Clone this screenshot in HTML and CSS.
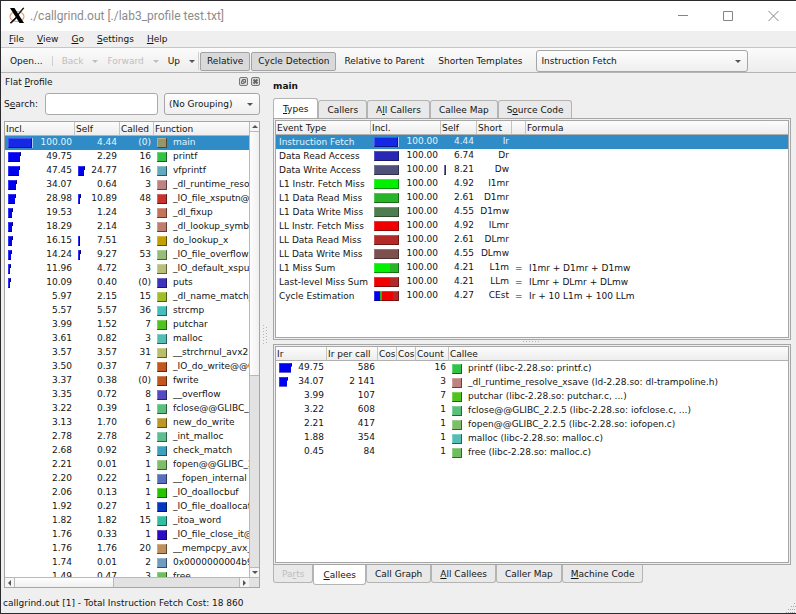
FILE: index.html
```html
<!DOCTYPE html>
<html lang="en">
<head>
<meta charset="utf-8">
<title>./callgrind.out [./lab3_profile test.txt]</title>
<link rel="stylesheet" href="styles.css">
</head>
<body>
<div class="window">
  <header class="titlebar">
    <svg class="logo" width="18" height="18" viewBox="0 0 18 18" aria-hidden="true">
      <ellipse cx="9" cy="9.500" rx="7" ry="5" fill="none" stroke="#e8a078" stroke-width="1.2"/>
      <path d="M2 1h4.500l9.500 15h-4.500z" fill="#000"/>
      <path d="M15 1h1L10 8.500 9.500 7.800zM8 10l.7.900L3.500 16H2z" fill="#000" stroke="#000" stroke-width=".6"/>
    </svg>
    <h1 class="title">./callgrind.out [./lab3_profile test.txt]</h1>
    <div class="controls">
      <button type="button" aria-label="Minimize"><svg width="11" height="11" viewBox="0 0 11 11"><path d="M0 4.500h10"/></svg></button>
      <button type="button" aria-label="Maximize"><svg width="11" height="11" viewBox="0 0 11 11"><path d="M.5.500h9v9h-9z"/></svg></button>
      <button type="button" aria-label="Close"><svg width="11" height="11" viewBox="0 0 11 11"><path d="M.5 0l10 10M10.500 0l-10 10"/></svg></button>
    </div>
  </header>
  <nav class="menubar">
    <button type="button"><u>F</u>ile</button>
    <button type="button"><u>V</u>iew</button>
    <button type="button"><u>G</u>o</button>
    <button type="button"><u>S</u>ettings</button>
    <button type="button"><u>H</u>elp</button>
  </nav>
  <div class="toolbar">
    <button type="button" class="tool open">Open...</button>
    <span class="sep"></span>
    <button type="button" class="tool drop" disabled>Back</button>
    <button type="button" class="tool drop" disabled>Forward</button>
    <button type="button" class="tool drop">Up</button>
    <span class="sep last"></span>
    <button type="button" class="tool toggle" aria-pressed="true">Relative</button>
    <button type="button" class="tool toggle" aria-pressed="true">Cycle Detection</button>
    <button type="button" class="tool plain">Relative to Parent</button>
    <button type="button" class="tool plain">Shorten Templates</button>
    <span class="combo event"><select aria-label="Event type"><option>Instruction Fetch</option></select></span>
  </div>
  <main class="body">
    <section class="dock">
      <div class="dock-title">
        <span>Flat <u>P</u>rofile</span>
        <span class="dock-buttons">
          <button type="button" aria-label="Float"><svg width="9" height="9" viewBox="0 0 9 9"><rect x=".5" y=".5" width="8" height="8" rx="1.500"/><path d="M3.500 4V2.500h3v3H5M2.500 4h2.500v2.500h-2.500z"/></svg></button>
          <button type="button" aria-label="Close dock"><svg width="9" height="9" viewBox="0 0 9 9"><rect x=".5" y=".5" width="8" height="8" rx="1.500"/><path class="cross" d="M2.500 2.500l4 4M6.500 2.500l-4 4"/></svg></button>
        </span>
      </div>
      <div class="search">
        <label for="search">S<u>e</u>arch:</label>
        <input id="search" type="text">
        <span class="combo"><select aria-label="Grouping"><option>(No Grouping)</option></select></span>
      </div>
      <div class="list">
        <div class="clip">
          <table class="grid profile">
            <colgroup><col class="w-incl"><col class="w-self"><col class="w-called"><col></colgroup>
            <thead><tr><th>Incl.</th><th>Self</th><th>Called</th><th>Function</th></tr></thead>
            <tbody id="profile"></tbody>
          </table>
        </div>
        <div class="vbar"><span class="arrow up"></span><span class="thumb"></span><span class="track"></span><span class="arrow down"></span></div>
        <div class="hbar"><span class="arrow left"></span><span class="thumb"></span><span class="track"></span><span class="arrow right"></span></div>
      </div>
    </section>
    <div class="handle vertical"><svg width="4" height="20" viewBox="0 0 4 20"><path d="M.5 0v20M3.500 2v18"/></svg></div>
    <section class="detail">
      <h2 class="name">main</h2>
      <div class="tabs top" role="tablist">
        <button type="button" role="tab" aria-selected="true"><u>T</u>ypes</button>
        <button type="button" role="tab">Callers</button>
        <button type="button" role="tab">A<u>l</u>l Callers</button>
        <button type="button" role="tab">Callee Map</button>
        <button type="button" role="tab">S<u>o</u>urce Code</button>
      </div>
      <div class="pane"><div class="clip">
        <table class="grid types">
          <colgroup><col class="w-type"><col class="w-incl"><col class="w-self2"><col class="w-short"><col class="w-eq"><col></colgroup>
          <thead><tr><th>Event Type</th><th>Incl.</th><th>Self</th><th>Short</th><th></th><th>Formula</th></tr></thead>
          <tbody id="types"></tbody>
        </table>
      </div></div>
      <div class="handle"><svg width="18" height="4" viewBox="0 0 18 4"><path d="M0 1.500h18"/></svg></div>
      <div class="pane"><div class="clip">
        <table class="grid callees">
          <colgroup><col class="w-ir"><col class="w-ir"><col class="w-cos"><col class="w-cos"><col class="w-count"><col></colgroup>
          <thead><tr><th>Ir</th><th>Ir per call</th><th>Cos</th><th>Cos</th><th>Count</th><th>Callee</th></tr></thead>
          <tbody id="callees"></tbody>
        </table>
      </div></div>
      <div class="tabs bottom" role="tablist">
        <button type="button" role="tab" disabled>Pa<u>r</u>ts</button>
        <button type="button" role="tab" aria-selected="true"><u>C</u>allees</button>
        <button type="button" role="tab">Call Graph</button>
        <button type="button" role="tab"><u>A</u>ll Callees</button>
        <button type="button" role="tab">Caller Map</button>
        <button type="button" role="tab"><u>M</u>achine Code</button>
      </div>
    </section>
  </main>
  <footer class="status">
    <span>callgrind.out [1] - Total Instruction Fetch Cost: 18 860</span>
    <svg class="grip" width="10" height="10" viewBox="0 0 10 10" aria-hidden="true"><path d="M8 .5h2M5 3.500h5M2 6.500h8M0 9.500h10"/></svg>
  </footer>
</div>
<script src="app.js"></script>
</body>
</html>
```
FILE: styles.css
```css
* { box-sizing: border-box; }

body {
  margin: 0;
  background: #efefef;
  color: #141414;
  font: 9px/14px "DejaVu Sans", sans-serif;
}

button, input, select { font: inherit; color: inherit; margin: 0; }
button { border: 0; padding: 0; background: none; white-space: nowrap; }
u { text-underline-offset: 1px; }

.window {
  height: 100vh;
  display: flex;
  flex-direction: column;
  border: 1px solid #2b2b2f;
  border-right: 0;
  background: #efefef;
}

.titlebar {
  display: flex;
  align-items: center;
  height: 30px;
  flex: none;
  padding-left: 7px;
  background: #fff;
}
.title {
  flex: 1;
  margin: 0 0 0 4px;
  font: 12px/16px Roboto, sans-serif;
  color: #8c8c8c;
}
.controls { display: flex; }
.controls button { width: 45px; height: 28px; }
.controls svg { display: block; margin: auto; }
.controls path { fill: none; stroke: #858585; }

.menubar {
  display: flex;
  flex: none;
  gap: 13px;
  height: 17px;
  padding-left: 8px;
  border-bottom: 1px solid #c6c6c6;
}

.toolbar {
  display: flex;
  align-items: center;
  flex: none;
  height: 25px;
  padding: 2px 0 0;
  background: linear-gradient(#fbfbfb, #ededed);
  border-bottom: 1px solid #b4b4b4;
}
.tool { height: 19px; }
.open { padding: 0 9px; }
.sep { width: 1px; height: 10px; background: #cfcfcf; }
.sep.last { height: 18px; margin: 0 1px 0 3px; }
.drop { display: flex; align-items: center; padding: 0 0 0 9px; }
.drop::after {
  content: "";
  margin-left: 9px;
  border: 3px solid transparent;
  border-top-color: #555;
  border-bottom: 0;
}
.drop:disabled { color: #bebebe; }
.drop:disabled::after { border-top-color: #bebebe; }
.toggle {
  padding: 0 6px;
  margin-right: 1px;
  border: 1px solid #a3a3a3;
  border-radius: 2px;
  background: #d9d9d9;
}
.plain { padding: 0 7px; }

.combo { position: relative; display: flex; height: 22px; }
.combo select {
  width: 100%;
  appearance: none;
  padding: 0 4px;
  border: 1px solid #a6a6a6;
  border-radius: 3px;
  background: linear-gradient(#fdfdfd, #efefef);
}
.combo::after {
  content: "";
  position: absolute;
  right: 7px;
  top: 10px;
  border: 3px solid transparent;
  border-top-color: #555;
  border-bottom: 0;
}
.event { width: 212px; margin-left: 7px; }

.body { flex: 1; min-height: 0; display: flex; }

.dock {
  width: 259px;
  flex: none;
  display: flex;
  flex-direction: column;
  padding-left: 3px;
}
.dock-title {
  display: flex;
  justify-content: space-between;
  height: 19px;
  padding: 2px 0 0 1px;
}
.dock-buttons { display: flex; align-items: flex-start; gap: 3px; padding-top: 2px; }
.dock-buttons svg { display: block; }
.dock-buttons rect { fill: #ddd; stroke: #777; }
.dock-buttons path { fill: none; stroke: #666; }
.dock-buttons .cross { stroke-width: 2; }

.search { display: flex; align-items: center; gap: 6px; height: 22px; margin: 1px 0 6px; }
.search label { width: 35px; white-space: nowrap; }
.search input {
  width: 113px;
  height: 22px;
  padding: 0 4px;
  border: 1px solid #aaa;
  border-radius: 3px;
  background: #fff;
}
.search .combo { flex: 1; }

.list {
  flex: 1;
  min-height: 0;
  display: grid;
  grid-template: minmax(0, 1fr) 10px / minmax(0, 1fr) 10px;
  border: 1px solid #a6a6a6;
  background: #fff;
}
.clip { overflow: hidden; min-height: 0; }

.grid { width: 100%; table-layout: fixed; border-collapse: separate; border-spacing: 0; }
.grid th {
  height: 14px;
  padding: 1px 0 0 1px;
  border-right: 1px solid #c4c4c4;
  border-bottom: 1px solid #b0b0b0;
  background: linear-gradient(#fcfcfc, #ededed);
  font-weight: normal;
  line-height: 12px;
  text-align: left;
  white-space: nowrap;
  overflow: hidden;
}
.grid th:last-child { border-right: 0; }
.grid td { height: 14px; padding: 0 3px 0 2px; line-height: 12px; white-space: nowrap; overflow: hidden; vertical-align: top; }
.grid td:last-child { padding-right: 0; }
.grid .selected td { background: #308cc6; color: #e4f3fc; }
.num { text-align: right; }
.grid .text { line-height: 14px; }
.grid .type { padding: 0 0 0 3px; }
.item { display: flex; align-items: center; gap: 6px; padding-left: 1px; }
.value { display: flex; justify-content: space-between; padding-left: 1px; }

.w-incl { width: 70px; }
.w-self { width: 45px; }
.w-called { width: 34px; }
.w-type { width: 95px; }
.w-self2 { width: 36px; }
.w-short { width: 35px; }
.w-eq { width: 14px; }
.w-ir { width: 51px; }
.w-cos { width: 19px; }
.w-count { width: 33px; }

.swatch {
  width: 10px;
  height: 10px;
  margin-top: 2px;
  flex: none;
  box-shadow: inset -1px -1px rgba(0, 0, 0, .5), inset 1px 1px rgba(255, 255, 255, .25);
}
.bar {
  height: 10px;
  margin-top: 2px;
  clip-path: polygon(0 0, 100% 0, 100% 40%, calc(100% - 1px) 40%, calc(100% - 1px) 100%, 0 100%);
  box-shadow: inset -1px -1px rgba(0, 0, 0, .4), inset 1px 1px rgba(255, 255, 255, .2);
}
.bar.full { clip-path: none; }
.selected .bar { border-right: 1px solid #a9cdf5; }

.vbar, .hbar { display: flex; background: #e2e2e2; }
.vbar { flex-direction: column; border-left: 1px solid #b9b9b9; }
.hbar { grid-column: 1 / 3; border-top: 1px solid #b9b9b9; padding-right: 10px; }
.arrow { display: grid; place-items: center; flex: none; background: #f6f6f6; }
.vbar .arrow { height: 10px; }
.hbar .arrow { width: 10px; }
.arrow::before { content: ""; border: 3px solid transparent; }
.up { border-bottom: 1px solid #b9b9b9; }
.down { border-top: 1px solid #b9b9b9; }
.left { border-right: 1px solid #b9b9b9; }
.right { border-left: 1px solid #b9b9b9; }
.up::before { border-bottom-color: #555; border-top: 0; }
.down::before { border-top-color: #555; border-bottom: 0; }
.left::before { border-right-color: #555; border-left: 0; }
.right::before { border-left-color: #555; border-right: 0; }
.vbar .thumb { flex: 56; background: linear-gradient(90deg, #fdfdfd, #f0f0f0); border-bottom: 1px solid #b9b9b9; }
.vbar .track { flex: 44; }
.hbar .thumb { flex: 44; background: linear-gradient(#fdfdfd, #f0f0f0); border-right: 1px solid #b9b9b9; }
.hbar .track { flex: 56; }

.handle { display: flex; justify-content: center; height: 4px; flex: none; }
.handle.vertical { width: 13px; height: auto; align-items: center; padding: 8px 3px 0 0; }
.handle path { fill: none; stroke: #b5b5b5; stroke-dasharray: 1 2; }

.detail {
  flex: 1;
  min-width: 0;
  display: flex;
  flex-direction: column;
  padding: 6px 5px 3px 0;
}
.name { margin: 0 0 5px; font-size: 9px; line-height: 14px; }
.pane {
  flex: 1;
  min-height: 0;
  display: grid;
  padding: 1px;
  border: 1px solid #a6a6a6;
  background: #efefef;
}
.pane .clip { border: 1px solid #a6a6a6; background: #fff; }

.tabs { display: flex; flex: none; height: 20px; }
.tabs button {
  height: 18px;
  padding: 0 8px;
  border: 1px solid #b4b4b4;
  background: #e9e9e9;
}
.tabs button:disabled { color: #bebebe; }
.tabs [aria-selected] { height: 20px; padding: 0 9px; background: #fff; }
.top { align-items: flex-end; }
.top button { border-radius: 3px 3px 0 0; border-bottom: 0; }
.bottom { align-items: flex-start; }
.bottom button { border-radius: 0 0 3px 3px; border-top: 0; }

.status {
  display: flex;
  justify-content: space-between;
  flex: none;
  height: 25px;
  padding: 8px 0 0 2px;
}
.grip { align-self: flex-end; }
.grip path { fill: none; stroke: #a8a8a8; stroke-dasharray: 1 1; }
```
FILE: app.js
```js
const profile = [
  ["100.00", "4.44", "(0)", "#969669", "main"],
  ["49.75", "2.29", "16", "#32c346", "printf"],
  ["47.45", "24.77", "16", "#64aabe", "vfprintf"],
  ["34.07", "0.64", "3", "#be8282", "_dl_runtime_reso"],
  ["28.98", "10.89", "48", "#c8322d", "_IO_file_xsputn@"],
  ["19.53", "1.24", "3", "#c3735a", "_dl_fixup"],
  ["18.29", "2.14", "3", "#be7d6e", "_dl_lookup_symb"],
  ["16.15", "7.51", "3", "#c3a000", "do_lookup_x"],
  ["14.24", "9.27", "53", "#96be78", "_IO_file_overflow"],
  ["11.96", "4.72", "3", "#b9be78", "_IO_default_xspu"],
  ["10.09", "0.40", "(0)", "#3c32be", "puts"],
  ["5.97", "2.15", "15", "#a0be28", "_dl_name_match_"],
  ["5.57", "5.57", "36", "#46bebe", "strcmp"],
  ["3.99", "1.52", "7", "#50c31e", "putchar"],
  ["3.61", "0.82", "3", "#55beb4", "malloc"],
  ["3.57", "3.57", "31", "#b9be69", "__strchrnul_avx2"],
  ["3.50", "0.37", "7", "#c3551e", "_IO_do_write@@G"],
  ["3.37", "0.38", "(0)", "#c3551e", "fwrite"],
  ["3.35", "0.72", "8", "#554bbe", "__overflow"],
  ["3.22", "0.39", "1", "#5abe7d", "fclose@@GLIBC_"],
  ["3.13", "1.70", "6", "#be9628", "new_do_write"],
  ["2.78", "2.78", "2", "#5fbe91", "_int_malloc"],
  ["2.68", "0.92", "3", "#3ca0be", "check_match"],
  ["2.21", "0.01", "1", "#7dbe69", "fopen@@GLIBC_2"],
  ["2.20", "0.22", "1", "#5a6ebe", "__fopen_internal"],
  ["2.06", "0.13", "1", "#28c300", "_IO_doallocbuf"],
  ["1.92", "0.27", "1", "#0037c3", "_IO_file_doallocat"],
  ["1.82", "1.82", "15", "#32bea0", "_itoa_word"],
  ["1.76", "0.33", "1", "#2d0ac3", "_IO_file_close_it@"],
  ["1.76", "1.76", "20", "#be915a", "__mempcpy_avx_"],
  ["1.74", "0.01", "2", "#6e9bbe", "0x0000000004b9"],
  ["1.49", "0.47", "3", "#6ebe5f", "free"]
];

const types = [
  ["Instruction Fetch", "4.44", "Ir", "#1428e6"],
  ["Data Read Access", "6.74", "Dr", "#2828b4"],
  ["Data Write Access", "8.21", "Dw", "#50507d"],
  ["L1 Instr. Fetch Miss", "4.92", "I1mr", "#00f000"],
  ["L1 Data Read Miss", "2.61", "D1mr", "#28b428"],
  ["L1 Data Write Miss", "4.55", "D1mw", "#507d50"],
  ["LL Instr. Fetch Miss", "4.92", "ILmr", "#f00000"],
  ["LL Data Read Miss", "2.61", "DLmr", "#b42828"],
  ["LL Data Write Miss", "4.55", "DLmw", "#7d5050"],
  ["L1 Miss Sum", "4.21", "L1m", "linear-gradient(90deg, #00f000 64%, #28b428 64%)", "I1mr + D1mr + D1mw"],
  ["Last-level Miss Sum", "4.21", "LLm", "linear-gradient(90deg, #f00000 64%, #b42828 64%)", "ILmr + DLmr + DLmw"],
  ["Cycle Estimation", "4.27", "CEst", "linear-gradient(90deg, #0000f0 24%, #28b428 24% 32%, #f00000 32% 76%, #b42828 76%)", "Ir + 10 L1m + 100 LLm"]
];

const callees = [
  ["49.75", "586", "16", "#32c346", "printf (libc-2.28.so: printf.c)"],
  ["34.07", "2 141", "3", "#be8282", "_dl_runtime_resolve_xsave (ld-2.28.so: dl-trampoline.h)"],
  ["3.99", "107", "7", "#50c31e", "putchar (libc-2.28.so: putchar.c, ...)"],
  ["3.22", "608", "1", "#5abe7d", "fclose@@GLIBC_2.2.5 (libc-2.28.so: iofclose.c, ...)"],
  ["2.21", "417", "1", "#7dbe69", "fopen@@GLIBC_2.2.5 (libc-2.28.so: iofopen.c)"],
  ["1.88", "354", "1", "#55beb4", "malloc (libc-2.28.so: malloc.c)"],
  ["0.45", "84", "1", "#6ebe5f", "free (libc-2.28.so: malloc.c)"]
];

// A bar is 25px long at 100%; costs too small to show get none.
function barWidth(share) {
  if (share < 7) return 0;
  if (share < 9) return 2;
  return Math.min(25, Math.floor(share / 4) + 1);
}

function value(cost, fill) {
  const share = Number(cost);
  const width = barWidth(share);
  const full = share === 100 || width < 3 ? " full" : "";
  const bar = width ? `<span class="bar${full}" style="width:${width}px;background:${fill}"></span>` : "<span></span>";
  return `<td><div class="value">${bar}<span>${cost}</span></div></td>`;
}

const num = text => `<td class="num">${text}</td>`;
const item = (color, name, cls = "") =>
  `<td class="${cls}"><div class="item"><span class="swatch" style="background:${color}"></span><span>${name}</span></div></td>`;
const row = (cells, selected) => `<tr${selected ? ' class="selected"' : ""}>${cells}</tr>`;
const fill = (id, rows) => { document.getElementById(id).innerHTML = rows.join(""); };

fill("profile", profile.map(([incl, own, called, color, name], i) =>
  row(value(incl, i ? "#0000f0" : "#1428e6") + value(own, "#0000f0") + num(called) + item(color, name), i === 0)));

fill("types", types.map(([name, own, short, color, formula], i) =>
  row(`<td class="text type">${name}</td>` + value("100.00", color) + value(own, "#50507d") + num(short) +
    `<td class="text type">${formula ? "=" : ""}</td><td class="text type">${formula || ""}</td>`, i === 0)));

fill("callees", callees.map(([ir, per, count, color, name]) =>
  row(value(ir, "#0000f0") + num(per) + "<td></td><td></td>" + num(count) + item(color, name, "text"))));
```
